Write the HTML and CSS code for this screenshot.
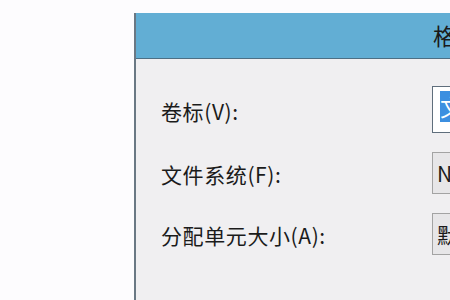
FILE: index.html
```html
<!DOCTYPE html>
<html lang="zh-CN">
<head>
<meta charset="utf-8">
<link rel="stylesheet" href="styles.css">
</head>
<body>
<div class="window">
  <div class="titlebar"><span class="title">格式化 新加卷 (D:)</span></div>
  <div class="content">
    <div class="form">
      <label class="label">卷标(V):</label>
      <div class="textbox"><span class="sel">文档</span></div>
      <label class="label">文件系统(F):</label>
      <div class="combo">NTFS (默认)</div>
      <label class="label">分配单元大小(A):</label>
      <div class="combo">默认配置大小</div>
    </div>
  </div>
</div>
</body>
</html>
```
FILE: styles.css
```css
html, body {
  margin: 0;
  padding: 0;
  background: #fdfcfe;
  overflow: hidden;
  width: 450px;
  height: 300px;
}
.window {
  margin-left: 134px;
  margin-top: 13px;
  width: 420px;
  height: 300px;
  border-left: 2px solid #6a7884;
  font-family: "Noto Sans CJK SC", "Noto Sans", sans-serif;
  color: #1b1b1b;
}
.titlebar {
  height: 46px;
  background: #62aed4;
  border-bottom: 1px solid #4d6f84;
  white-space: nowrap;
  overflow: hidden;
  padding-left: 297px;
  box-sizing: border-box;
}
.title {
  font-size: 23px;
  line-height: 44px;
  color: #1a1a1a;
}
.content {
  background: #f0eff1;
  height: 260px;
  padding-top: 27px;
  padding-left: 25px;
  box-sizing: border-box;
}
.form {
  display: grid;
  grid-template-columns: 271px 200px;
  grid-template-rows: 47px 42px 42px;
  row-gap: 19px;
  align-items: center;
}
.label {
  font-size: 21px;
  line-height: 24px;
  letter-spacing: 0.6px;
  white-space: nowrap;
  position: relative;
  top: 1px;
}
.textbox {
  height: 47px;
  box-sizing: border-box;
  border: 1px solid #5f6e7c;
  background: #ffffff;
  padding: 4px 0 0 7px;
  white-space: nowrap;
  overflow: hidden;
}
.sel {
  display: inline-block;
  background: #3c8fe0;
  color: #ffffff;
  font-size: 23px;
  line-height: 31px;
}
.combo {
  height: 42px;
  box-sizing: border-box;
  border: 1px solid #a3a3a3;
  background: #e7e6e8;
  font-size: 21px;
  line-height: 40px;
  padding-left: 4px;
  white-space: nowrap;
  overflow: hidden;
}
```
